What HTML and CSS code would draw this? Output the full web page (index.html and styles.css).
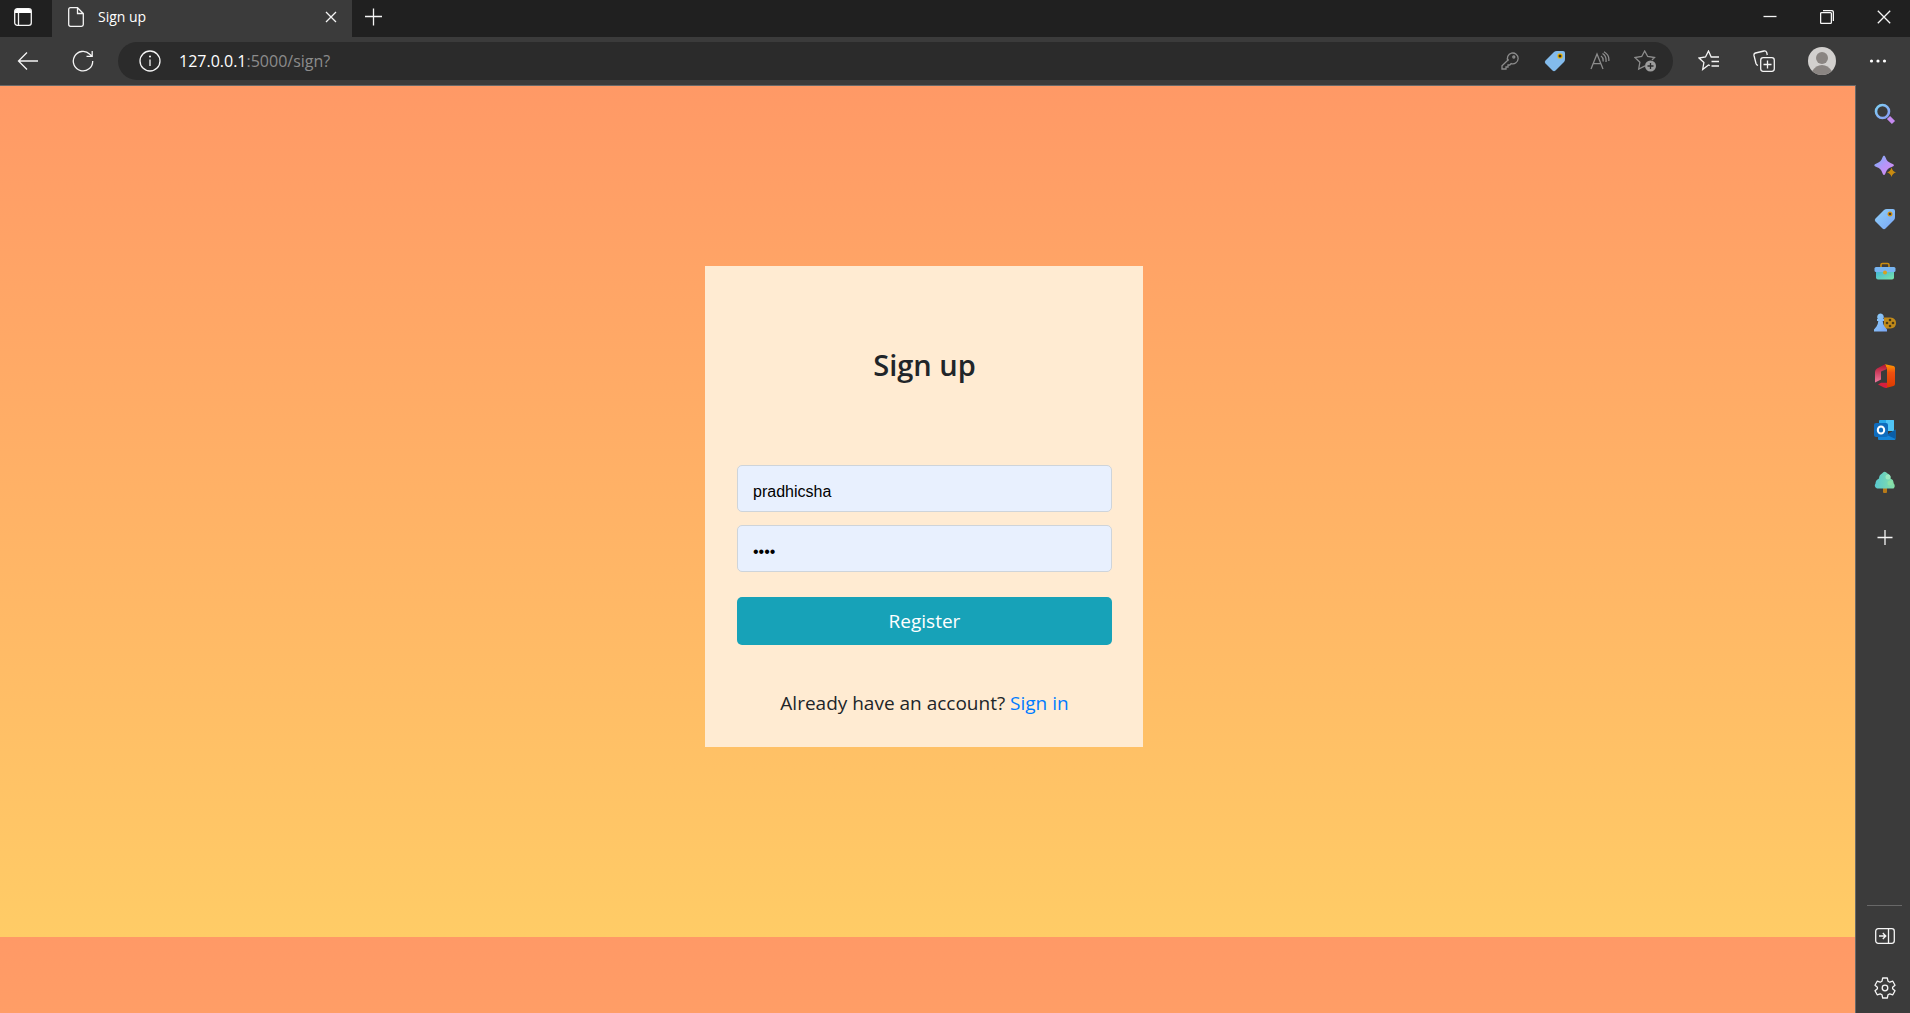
FILE: index.html
```html
<!DOCTYPE html>
<html lang="en">
<head>
<meta charset="utf-8">
<title>Sign up</title>
<link rel="stylesheet" href="styles.css">
</head>
<body>
<svg class="defs" width="0" height="0" aria-hidden="true">
  <defs>
    <linearGradient id="sky" x1="0" y1="0" x2="1" y2="1"><stop offset="0" stop-color="#8fd0f8"/><stop offset="1" stop-color="#7aa5f5"/></linearGradient>
    <linearGradient id="lens" x1="0" y1="0" x2="1" y2="1"><stop offset="0" stop-color="#7ed0f5"/><stop offset="1" stop-color="#8a9cf5"/></linearGradient>
    <linearGradient id="violet" x1="0" y1="0" x2="1" y2="1"><stop offset="0" stop-color="#6fb4f7"/><stop offset=".5" stop-color="#b695f8"/><stop offset="1" stop-color="#d98af0"/></linearGradient>
    <linearGradient id="mint" x1="0" y1="0" x2="1" y2="1"><stop offset="0" stop-color="#3fb4dc"/><stop offset="1" stop-color="#7be6a8"/></linearGradient>
    <linearGradient id="leaf" x1="0" y1="0" x2="1" y2="0"><stop offset="0" stop-color="#58c8d0"/><stop offset="1" stop-color="#86dfa6"/></linearGradient>
    <linearGradient id="flame" x1="0" y1="0" x2="0" y2="1"><stop offset="0" stop-color="#ff9a00"/><stop offset=".35" stop-color="#ee5010"/><stop offset="1" stop-color="#dc3a00"/></linearGradient>
    <linearGradient id="rose" x1="0" y1="0" x2="0" y2="1"><stop offset="0" stop-color="#b3122d"/><stop offset="1" stop-color="#f07aa0"/></linearGradient>
  </defs>
</svg>

<header class="tabbar">
  <button class="tool tab-menu" aria-label="Tab actions">
    <svg width="18" height="18" viewBox="0 0 18 18"><rect x=".7" y=".7" width="16.6" height="16.6" rx="2.6" class="line"/><path d="M1 5V3Q1 1 3 1H15Q17 1 17 3V5Z" fill="#fff"/><path d="M4.5 5V17" class="line"/></svg>
  </button>
  <div class="tab">
    <svg width="16" height="20" viewBox="0 0 16 20"><path d="M2.500 .7H9.500L15.300 6.500V17.500Q15.300 19.300 13.500 19.300H2.500Q.7 19.300 .7 17.500V2.500Q.7 .7 2.500 .7ZM9.500 .7V6.500H15.300" class="line"/></svg>
    <span class="tab-title">Sign up</span>
    <button class="tool tab-close" aria-label="Close tab">
      <svg width="12" height="12" viewBox="0 0 12 12"><path d="M1 1L11 11M11 1L1 11" class="line"/></svg>
    </button>
  </div>
  <button class="tool new-tab" aria-label="New tab">
    <svg width="18" height="18" viewBox="0 0 18 18"><path d="M8.500 .5V17.500M0 8.500H17" class="line"/></svg>
  </button>
  <div class="window-controls">
    <button class="tool" aria-label="Minimize"><svg width="14" height="14" viewBox="0 0 14 14"><path d="M.5 6.500H13.500" class="line"/></svg></button>
    <button class="tool" aria-label="Restore"><svg width="14" height="14" viewBox="0 0 14 14"><rect x=".6" y="2.600" width="10.800" height="10.800" rx="1" class="line"/><path d="M3 .6H11.500Q13.400 .6 13.400 2.500V11" class="line"/></svg></button>
    <button class="tool" aria-label="Close"><svg width="14" height="14" viewBox="0 0 14 14"><path d="M.8 .8L13.200 13.200M13.200 .8L.8 13.200" class="line"/></svg></button>
  </div>
</header>

<nav class="toolbar" aria-label="Browser">
  <button class="tool" aria-label="Back"><svg width="22" height="20" viewBox="0 0 22 20"><path d="M10 1.500L1.500 10L10 18.500M1.500 10H21" class="line"/></svg></button>
  <button class="tool" aria-label="Refresh"><svg width="22" height="22" viewBox="0 0 22 22"><path d="M20.700 11A9.700 9.700 0 1 1 17.800 4.200L20 6.200M20.200 1V6.300H14.500" class="line"/></svg></button>
  <div class="address">
    <button class="tool" aria-label="Site information"><svg width="22" height="22" viewBox="0 0 22 22"><circle cx="11" cy="11" r="10" class="line"/><path d="M11 9.500V16" class="line"/><circle cx="11" cy="6.500" r="1" fill="#fff"/></svg></button>
    <p class="url"><span class="host">127.0.0.1</span>:5000/sign?</p>
    <div class="address-actions">
      <button class="tool" aria-label="Saved password"><svg width="20" height="20" viewBox="0 0 20 20"><path d="M8 10A5.400 5.400 0 1 1 11.200 12.600L9.800 14H8V16H6V18H2V14.800L8 9Z" class="dim"/><circle cx="13.800" cy="6" r="1" class="dim"/></svg></button>
      <button class="tool" aria-label="Coupons"><svg width="22" height="22" viewBox="0 0 22 22"><path d="M13 1H19Q21 1 21 3V9Q21 11 20 12L11.500 20.500Q10 22 8.500 20.500L1.500 13.500Q0 12 1.500 10.500L10 2Q11 1 13 1Z" fill="#83bbec"/><rect x="13.500" y="3.500" width="5" height="5" rx="1.500" fill="#f0b400"/><circle cx="16" cy="6" r="1.500" fill="#33301f"/></svg></button>
      <button class="tool" aria-label="Read aloud"><svg width="20" height="20" viewBox="0 0 20 20"><path d="M1 18L7 3L13 18M3.200 12.700H10.800M11 5Q13.700 7 13 10.500M12.500 2.500Q16.700 5 16 11M14 .8Q19.600 4 18.800 10" class="dim"/></svg></button>
      <button class="tool" aria-label="Add to favorites"><svg width="22" height="22" viewBox="0 0 22 22"><path d="M11 15.800L4.700 19L5.900 12.200L1 7.500L7.700 6.500L10.700 1L13.700 6.500L20.500 7.500L18 10" class="dim"/><circle cx="16.500" cy="16" r="5.500" fill="#9c9c9c"/><path d="M16.500 13V19M13.500 16H19.500" stroke="#2b2b2b" stroke-width="1.300"/></svg></button>
    </div>
  </div>
  <div class="browser-actions">
    <button class="tool" aria-label="Favorites"><svg width="22" height="22" viewBox="0 0 22 22"><path d="M12 15.500L10.500 15L4.700 19.500L5.900 12.500L1 8L7.500 7L10.500 1L13.200 7H21M13.500 11.500H21M13.500 16H21" class="line"/></svg></button>
    <button class="tool" aria-label="Collections"><svg width="22" height="22" viewBox="0 0 22 22"><rect x="7.700" y="7.700" width="13.600" height="13.600" rx="2.500" class="line"/><path d="M14.500 10.500V18.500M10.500 14.500H18.500M5 15.500Q3.500 15 3 13.500L1 5.500Q.6 3.500 2.500 3L11 1Q13 .6 13.700 2.500L14.300 5" class="line"/></svg></button>
    <button class="tool" aria-label="Profile"><svg width="28" height="28" viewBox="0 0 28 28"><circle cx="14" cy="14" r="14" fill="#d2d0ce"/><circle cx="14" cy="11" r="6" fill="#8a8582"/><path d="M4.200 24Q8 18 14 18T23.800 24Q20 28 14 28T4.200 24Z" fill="#8a8582"/></svg></button>
    <button class="tool" aria-label="Settings and more"><svg width="18" height="4" viewBox="0 0 18 4"><g fill="#fff"><circle cx="2.500" cy="2" r="1.600"/><circle cx="9" cy="2" r="1.600"/><circle cx="15.500" cy="2" r="1.600"/></g></svg></button>
  </div>
</nav>

<div class="content">
  <main class="page">
    <form class="card">
      <h1>Sign up</h1>
      <input class="field" type="text" value="pradhicsha" aria-label="Username">
      <input class="field" type="password" value="abcd" aria-label="Password">
      <button class="register" type="button">Register</button>
      <p class="signin">Already have an account? <a href="#">Sign in</a></p>
    </form>
  </main>

  <aside class="sidebar" aria-label="Sidebar">
    <div class="apps">
      <button class="tool" aria-label="Search"><svg width="22" height="22" viewBox="0 0 22 22"><path d="M14.500 14.500L19.500 19.500" stroke="#c58af0" stroke-width="4.500"/><circle cx="8.500" cy="8.500" r="6.500" fill="none" stroke="url(#lens)" stroke-width="2.600"/></svg></button>
      <button class="tool" aria-label="Discover"><svg width="22" height="22" viewBox="0 0 22 22"><path d="M10 .5Q11 .5 11.800 3Q13 6.700 17 8.300Q20 9.300 20 10.300T17 12.300Q13 13.700 11.800 17.500Q11 20 10 20T8.200 17.500Q7 13.700 3 12.300Q.2 11.300 .2 10.300T3 8.300Q7 6.700 8.200 3Q9 .5 10 .5Z" fill="url(#violet)"/><path d="M17.500 12.500Q18.500 16.500 22 17.300Q18.500 18.200 17.500 22Q16.500 18.200 13 17.300Q16.500 16.500 17.500 12.500Z" fill="#c98b10"/></svg></button>
      <button class="tool" aria-label="Shopping"><svg width="22" height="22" viewBox="0 0 22 22"><path d="M13 1H19Q21 1 21 3V9Q21 11 20 12L11.500 20.500Q10 22 8.500 20.500L1.500 13.500Q0 12 1.500 10.500L10 2Q11 1 13 1Z" fill="url(#sky)"/><circle cx="16" cy="6" r="2.500" fill="#d9940f"/><circle cx="16" cy="6" r="1.300" fill="#3b3b3b"/></svg></button>
      <button class="tool" aria-label="Tools"><svg width="22" height="22" viewBox="0 0 22 22"><path d="M7 8V5Q7 3.500 8.500 3.500H13.500Q15 3.500 15 5V8" fill="none" stroke="#c98b10" stroke-width="1.600"/><path d="M2 11H20V17.500Q20 19.500 18 19.500H4Q2 19.500 2 17.500Z" fill="url(#mint)"/><rect x=".5" y="7" width="21" height="5" rx="1.500" fill="#78b5f2"/><circle cx="11" cy="12.500" r="2" fill="#d9a020"/></svg></button>
      <button class="tool" aria-label="Games"><svg width="22" height="22" viewBox="0 0 22 22"><path d="M10 5.500H16.500Q22 6 22 11T16.500 16.500H10Z" fill="#c18a1a"/><g fill="#4a3a18"><circle cx="13" cy="11" r="1.300"/><circle cx="19" cy="11" r="1.300"/><circle cx="16" cy="8" r="1.300"/><circle cx="16" cy="14" r="1.300"/></g><path d="M6.500 1.500A3.500 3.500 0 0 1 9.200 7H10V9H8.700Q9 12.500 10.500 14.500L13 17.500V19.500H0V17.500L2.500 14.500Q4 12.500 4.300 9H3V7H3.800A3.500 3.500 0 0 1 6.500 1.500Z" fill="url(#sky)"/></svg></button>
      <button class="tool" aria-label="Microsoft 365"><svg width="22" height="24" viewBox="0 0 22 24"><path d="M11 .3L19.500 2Q21 2.500 21 4V20Q21 21.500 19.500 22L12 24L13 19V5Z" fill="url(#flame)"/><path d="M11 .3L13 5L7 7.500V15.500L1 18.500V8Q1 5.500 3 4.500Z" fill="url(#rose)"/><path d="M4 20.500L7 18.800H13V23.700Q11.500 24.300 10 23.500Z" fill="#d81f3e"/></svg></button>
      <button class="tool" aria-label="Outlook"><svg width="22" height="22" viewBox="0 0 22 22"><rect x="5" y="1" width="15" height="11" rx="1" fill="#28a8ea"/><path d="M12 1H19Q20 1 20 2V12H12Z" fill="#50c4f5"/><path d="M4 11L13 16L21.500 10.500V20Q21.500 21 20.500 21H5Q4 21 4 20Z" fill="#1484d8"/><path d="M13 16L21.500 10.500V20Z" fill="#0a5ea8"/><rect x="0" y="4" width="14" height="14" rx="2" fill="#0f6cbd"/><ellipse cx="7" cy="11" rx="3.200" ry="3.500" fill="none" stroke="#fff" stroke-width="2"/></svg></button>
      <button class="tool" aria-label="Drop"><svg width="22" height="22" viewBox="0 0 22 22"><rect x="9" y="15" width="4" height="7" rx="1" fill="#b87a18"/><path d="M8 2.500Q10.500 -.8 13.500 2.500Q17 4 16.500 7.500Q20 9 19.500 12Q22 15 19.500 17.500H3Q-.5 16 1.500 12.500Q1.500 9 5 7.500Q5 4 8 2.500Z" fill="url(#leaf)"/><circle cx="14" cy="6" r="2.500" fill="#9be8c0"/><circle cx="16" cy="12" r="2.500" fill="#8ae0a8"/></svg></button>
    </div>
    <button class="tool add-app" aria-label="Customize"><svg width="16" height="16" viewBox="0 0 16 16"><path d="M8 0V15M.5 7.500H15.500" class="line"/></svg></button>
    <div class="sidebar-tools">
      <button class="tool" aria-label="Hide sidebar"><svg width="20" height="16" viewBox="0 0 20 16"><rect x=".7" y=".7" width="18.600" height="14.600" rx="2.500" class="line"/><path d="M13.500 1V15M4 8H10.500M7.800 5L10.800 8L7.800 11" class="line"/></svg></button>
      <button class="tool" aria-label="Settings"><svg width="22" height="22" viewBox="0 0 22 22"><path d="M8.700 1H13.300L14 4.200L15.800 5.200L18.800 4.200L21 8.200L18.600 10.300V11.700L21 13.800L18.800 17.800L15.800 16.800L14 17.800L13.300 21H8.700L8 17.800L6.200 16.800L3.200 17.800L1 13.800L3.400 11.700V10.300L1 8.200L3.200 4.200L6.200 5.200L8 4.200Z" stroke-linejoin="round" class="line"/><circle cx="11" cy="11" r="2.800" class="line"/></svg></button>
    </div>
  </aside>
</div>
</body>
</html>
```
FILE: styles.css
```css
* { box-sizing: border-box; }

body {
  margin: 0;
  min-height: 100vh;
  display: flex;
  flex-direction: column;
  font-family: "Open Sans", "Noto Sans", sans-serif;
  background: #3b3b3b;
}

h1, p { margin: 0; }

.defs { position: absolute; }

.line { fill: none; stroke: #f5f5f5; stroke-width: 1.3; }
.dim { fill: none; stroke: #8c8c8c; stroke-width: 1.3; }

.tool {
  display: flex;
  align-items: center;
  justify-content: center;
  padding: 0;
  border: 0;
  background: none;
  flex: none;
}

/* Tab strip */
.tabbar {
  display: flex;
  height: 37px;
  background: #202020;
}
.tab-menu {
  width: 52px;
  padding: 0 6px 3px 0;
}
.tab {
  display: flex;
  align-items: center;
  width: 300px;
  padding: 0 14px 3px 16px;
  background: #3b3b3b;
}
.tab-title {
  flex: 1;
  padding-left: 14px;
  font-size: 14px;
  line-height: 20px;
  color: #fff;
}
.tab-close { width: 14px; }
.new-tab { width: 44px; padding-bottom: 4px; }
.window-controls {
  display: flex;
  gap: 43px;
  margin-left: auto;
  padding: 0 19px 4px 0;
}

/* Toolbar */
.toolbar {
  display: flex;
  align-items: center;
  height: 48px;
  padding: 0 23px 0 17px;
  gap: 33px;
}
.address {
  flex: 1;
  display: flex;
  align-items: center;
  height: 38px;
  margin-left: -9px;
  padding: 0 17px 0 21px;
  border-radius: 19px;
  background: #2b2b2b;
}
.url {
  flex: 1;
  padding-left: 18px;
  font-size: 16px;
  line-height: 22px;
  color: #8c8c8c;
}
.host { color: #fff; }
.address-actions { display: flex; align-items: center; gap: 24px; }
.browser-actions {
  display: flex;
  align-items: center;
  gap: 33px;
  margin-left: -8px;
}

/* Page and sidebar */
.content { flex: 1; display: flex; }
.page {
  flex: 1;
  padding: 180px 7px 85px 0;
  border-top: 1px solid #686868;
  background: linear-gradient(#ff9966, #ffcc66) 0 0 / 100% 851px repeat-y;
}
.card {
  display: flex;
  flex-direction: column;
  width: 438px;
  max-width: 100%;
  margin: 0 auto;
  padding: 79px 31px 29px 32px;
  background: #ffebd2;
  color: #212529;
}
.card h1 {
  margin-bottom: 80px;
  font-size: 29px;
  font-weight: 600;
  line-height: 40px;
  text-align: center;
}
.field {
  height: 47px;
  margin-bottom: 13px;
  padding: 6px 15px 0;
  border: 1px solid #ced4da;
  border-radius: 5px;
  background: #e8f0fe;
  color: #000;
  font: 16px/24px "Liberation Sans", Arial, sans-serif;
}
.register {
  height: 48px;
  margin: 12px 0 43px;
  padding: 0;
  border: 0;
  border-radius: 5px;
  background: #17a2b8;
  color: #fff;
  font: 19px/28px "Open Sans", "Noto Sans", sans-serif;
}
.signin {
  font-size: 19px;
  line-height: 30px;
  text-align: center;
}
.signin a { color: #007bff; text-decoration: none; }

.sidebar {
  display: flex;
  flex-direction: column;
  align-items: center;
  width: 55px;
  padding: 18px 0 14px 3px;
  border-left: 1px solid #686868;
}
.apps {
  display: flex;
  flex-direction: column;
  justify-content: space-between;
  height: 390px;
}
.add-app { margin-top: 37px; }
.sidebar-tools {
  display: flex;
  flex-direction: column;
  align-items: center;
  gap: 33px;
  width: 35px;
  margin-top: auto;
  padding-top: 22px;
  border-top: 1px solid #686868;
}
```
